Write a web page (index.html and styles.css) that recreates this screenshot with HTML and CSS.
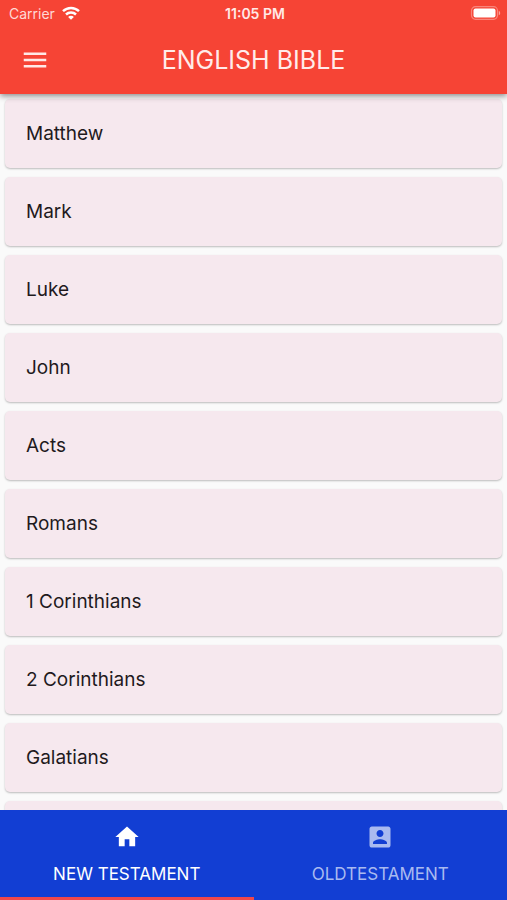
FILE: index.html
```html
<!DOCTYPE html>
<html lang="en">
<head>
<meta charset="utf-8">
<meta name="viewport" content="width=device-width, initial-scale=1">
<title>English Bible</title>
<link rel="stylesheet" href="styles.css">
</head>
<body>
<header class="top">
  <div class="status">
    <div class="status-left">
      <span class="carrier">Carrier</span>
      <svg class="wifi" viewBox="0 0 18 14" aria-hidden="true">
        <g fill="none" stroke="currentColor" stroke-width="2.5">
          <path d="M1 5.2C5.600.9 12.400.9 17 5.200"/>
          <path d="M4 8.500C6.800 5.900 11.200 5.900 14 8.500"/>
        </g>
        <path fill="currentColor" d="M9 13.800 6.100 10.900C7.700 9.300 10.300 9.300 11.900 10.900Z"/>
      </svg>
    </div>
    <span class="clock">11:05 PM</span>
    <div class="status-right">
      <svg class="battery" viewBox="0 0 31 14" aria-hidden="true">
        <rect x="1.500" y="0.700" width="26" height="12.600" rx="4" fill="none" stroke="#fff" stroke-opacity=".35" stroke-width="1.200"/>
        <rect x="3.500" y="2.500" width="22" height="9" rx="2" fill="#fff"/>
        <path d="M28.800 4.700v4.600c1.900-.8 1.900-3.800 0-4.600z" fill="#fff" fill-opacity=".5"/>
      </svg>
    </div>
  </div>
  <div class="bar">
    <button class="menu" type="button" aria-label="Menu">
      <svg viewBox="0 0 24 24" aria-hidden="true"><path fill="currentColor" d="M3 18h18v-2H3v2zm0-5h18v-2H3v2zm0-7v2h18V6H3z"/></svg>
    </button>
    <h1 class="title">ENGLISH BIBLE</h1>
  </div>
</header>
<main class="content">
  <ul class="books">
    <li><a class="book" href="#matthew">Matthew</a></li>
    <li><a class="book" href="#mark">Mark</a></li>
    <li><a class="book" href="#luke">Luke</a></li>
    <li><a class="book" href="#john">John</a></li>
    <li><a class="book" href="#acts">Acts</a></li>
    <li><a class="book" href="#romans">Romans</a></li>
    <li><a class="book" href="#1-corinthians">1 Corinthians</a></li>
    <li><a class="book" href="#2-corinthians">2 Corinthians</a></li>
    <li><a class="book" href="#galatians">Galatians</a></li>
    <li><a class="book" href="#next" aria-label="Next book"></a></li>
  </ul>
</main>
<nav class="tabs">
  <a class="tab active" href="#new">
    <svg viewBox="0 0 24 24" aria-hidden="true"><path fill="currentColor" d="M10 20v-6h4v6h5v-8h3L12 3 2 12h3v8z"/></svg>
    <span>NEW TESTAMENT</span>
  </a>
  <a class="tab" href="#old">
    <svg viewBox="0 0 24 24" aria-hidden="true"><path fill="currentColor" d="M3 5v14c0 1.100.89 2 2 2h14c1.100 0 2-.9 2-2V5c0-1.100-.9-2-2-2H5c-1.110 0-2 .9-2 2zm12 4c0 1.660-1.340 3-3 3s-3-1.340-3-3 1.340-3 3-3 3 1.340 3 3zm-9 8c0-2 4-3.100 6-3.100s6 1.100 6 3.100v1H6v-1z"/></svg>
    <span>OLDTESTAMENT</span>
  </a>
</nav>
</body>
</html>
```
FILE: styles.css
```css
* { box-sizing: border-box; }

body {
  margin: 0;
  height: 100vh;
  display: flex;
  flex-direction: column;
  background: #fafafa;
  color: #1f1a1d;
  font-family: Inter, "Liberation Sans", sans-serif;
}

a { color: inherit; text-decoration: none; }

.top {
  position: relative;
  z-index: 1;
  background: #f64435;
  color: #fff;
  box-shadow: 0 2px 6px rgba(0, 0, 0, .45);
}

.status {
  display: grid;
  grid-template-columns: 1fr auto 1fr;
  align-items: center;
  height: 26px;
  padding: 0 6px 0 9px;
}

.status-left { display: flex; align-items: center; gap: 7px; }
.status-right { display: flex; justify-content: flex-end; }
.carrier { font-size: 14px; color: #ffd9d5; }
.clock { font-size: 14px; font-weight: 600; color: #ffe9e6; }
.wifi { width: 18px; height: 14px; }
.battery { width: 31px; height: 14px; }

.bar {
  display: grid;
  grid-template-columns: 70px 1fr 70px;
  align-items: center;
  height: 68px;
}

.menu {
  display: flex;
  justify-content: center;
  padding: 0;
  border: 0;
  background: none;
  color: #ffe9e6;
}
.menu svg { width: 30px; height: 30px; }

.title {
  margin: 0;
  text-align: center;
  font-size: 25px;
  font-weight: 400;
  color: #ffecea;
}

.content { flex: 1; min-height: 0; overflow: hidden; }

.books {
  display: flex;
  flex-direction: column;
  gap: 9px;
  margin: 0;
  padding: 5px;
  list-style: none;
}

.book {
  display: flex;
  align-items: center;
  height: 69px;
  padding: 0 21px;
  border-radius: 5px;
  background: #f6e8ee;
  box-shadow: 0 1px 2px rgba(0, 0, 0, .25);
  font-size: 19px;
}

.tabs { display: flex; height: 90px; background: #123ed3; }

.tab {
  flex: 1;
  display: flex;
  flex-direction: column;
  align-items: center;
  gap: 13px;
  padding-top: 13px;
  border-bottom: 3px solid transparent;
  color: #a9baf0;
  font-size: 17px;
  line-height: 20px;
}
.tab svg { width: 28px; height: 28px; }
.tab.active { color: #fff; border-bottom-color: #f0474a; }
```
